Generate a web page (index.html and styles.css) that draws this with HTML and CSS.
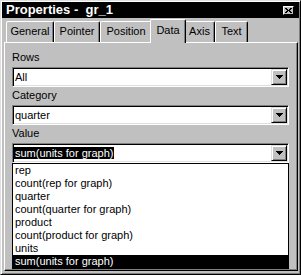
FILE: index.html
```html
<!DOCTYPE html>
<html>
<head>
  <meta charset="UTF-8">
  <title>Properties - gr_1</title>
  <link rel="stylesheet" href="styles.css">
</head>
<body>
  <div id="props-window">
    <div class="title-bar">
      <span class="title-text">Properties -  gr_1</span>
      <span class="close-btn">
        <svg width="7" height="5" viewBox="0 0 7 5" shape-rendering="crispEdges">
          <path d="M0 0h2v1H0zM5 0h2v1H5zM1 1h2v1H1zM4 1h2v1H4zM2 2h3v1H2zM1 3h2v1H1zM4 3h2v1H4zM0 4h2v1H0zM5 4h2v1H5z" fill="#000"/>
        </svg>
      </span>
    </div>

    <div class="tabs">
      <div class="tab" style="width:48px">General</div>
      <div class="tab" style="width:46px">Pointer</div>
      <div class="tab" style="width:52px">Position</div>
      <div class="tab active" style="width:36px">Data</div>
      <div class="tab" style="width:31px">Axis</div>
      <div class="tab" style="width:33px">Text</div>
    </div>

    <div class="panel">
      <div class="field-label">Rows</div>
      <div class="combo">
        <span class="combo-text">All</span>
        <span class="combo-btn"><svg width="7" height="4" viewBox="0 0 7 4" shape-rendering="crispEdges"><path d="M0 0h7v1H0zM1 1h5v1H1zM2 2h3v1H2zM3 3h1v1H3z" fill="#000"/></svg></span>
      </div>

      <div class="field-label">Category</div>
      <div class="combo">
        <span class="combo-text">quarter</span>
        <span class="combo-btn"><svg width="7" height="4" viewBox="0 0 7 4" shape-rendering="crispEdges"><path d="M0 0h7v1H0zM1 1h5v1H1zM2 2h3v1H2zM3 3h1v1H3z" fill="#000"/></svg></span>
      </div>

      <div class="field-label">Value</div>
      <div class="combo open">
        <span class="combo-text has-sel"><span class="sel">sum(units for graph)</span></span>
        <span class="combo-btn"><svg width="7" height="4" viewBox="0 0 7 4" shape-rendering="crispEdges"><path d="M0 0h7v1H0zM1 1h5v1H1zM2 2h3v1H2zM3 3h1v1H3z" fill="#000"/></svg></span>
      </div>
      <ul class="drop-list">
        <li>rep</li>
        <li>count(rep for graph)</li>
        <li>quarter</li>
        <li>count(quarter for graph)</li>
        <li>product</li>
        <li>count(product for graph)</li>
        <li>units</li>
        <li class="selected">sum(units for graph)</li>
      </ul>
    </div>
  </div>
</body>
</html>
```

FILE: styles.css
```css
body {
  margin: 0;
  font-family: "Liberation Sans", Arial, sans-serif;
  font-size: 11px;
  color: #000;
  background: #c0c0c0;
}
#props-window {
  width: 301px;
  height: 275px;
  box-sizing: border-box;
  display: flex;
  flex-direction: column;
  background: #c0c0c0;
  border: 1px solid;
  border-color: #dfdfdf #000 #000 #dfdfdf;
  box-shadow: inset 1px 1px #fff, inset -1px -1px #808080;
  padding: 1px;
}
.title-bar {
  height: 16px;
  flex: none;
  display: flex;
  align-items: center;
  justify-content: space-between;
  background: #000;
  color: #fff;
  padding-left: 4px;
}
.title-text {
  font-weight: bold;
  font-size: 13px;
  line-height: 16px;
  white-space: pre;
}
.close-btn {
  width: 11px;
  height: 9px;
  box-sizing: border-box;
  margin-right: 5px;
  display: flex;
  align-items: center;
  justify-content: center;
  background: #c0c0c0;
  border: 1px solid;
  border-color: #fff #000 #000 #fff;
}
.close-btn svg {
  display: block;
}
.tabs {
  height: 24px;
  flex: none;
  display: flex;
  align-items: flex-end;
  padding-left: 4px;
}
.tab {
  height: 21px;
  box-sizing: border-box;
  flex: none;
  text-align: center;
  line-height: 13px;
  padding-top: 3px;
  background: #c0c0c0;
  border-top: 1px solid #fff;
  border-left: 1px solid #fff;
  border-right: 1px solid #000;
  border-radius: 2px 2px 0 0;
  box-shadow: inset -1px 0 #808080;
}
.tab.active {
  position: relative;
  z-index: 1;
  height: 24px;
  padding-top: 4px;
  margin: 0 -2px -1px -2px;
}
.panel {
  flex: 1;
  margin: 0 1px 2px 2px;
  padding: 8px 7px 1px 7px;
  border-top: 1px solid #fff;
  border-left: 1px solid #fff;
  border-right: 1px solid #000;
  border-bottom: 1px solid #000;
  box-shadow: inset -1px -1px #808080;
}
.field-label {
  line-height: 13px;
  margin-bottom: 3px;
}
.combo {
  width: 277px;
  height: 20px;
  box-sizing: border-box;
  display: flex;
  align-items: center;
  padding: 1px;
  margin-bottom: 2px;
  background: #fff;
  border: 1px solid;
  border-color: #808080 #fff #fff #808080;
  box-shadow: inset 1px 1px #000, inset -1px -1px #dfdfdf;
}
.combo.open {
  margin-bottom: 0;
}
.combo-text {
  flex: 1;
  line-height: 16px;
  padding-left: 1px;
  white-space: nowrap;
}
.combo-text.has-sel {
  padding-left: 0;
}
.sel {
  display: inline-block;
  line-height: 12px;
  padding: 0 1px;
  background: #000;
  color: #fff;
}
.combo-btn {
  width: 16px;
  height: 16px;
  box-sizing: border-box;
  display: flex;
  align-items: center;
  justify-content: center;
  background: #c0c0c0;
  border: 1px solid;
  border-color: #dfdfdf #000 #000 #dfdfdf;
  box-shadow: inset 1px 1px #fff, inset -1px -1px #808080;
}
.combo-btn svg {
  display: block;
}
.drop-list {
  list-style: none;
  margin: 0;
  padding: 0;
  width: 277px;
  box-sizing: border-box;
  border: 1px solid #000;
  background: #fff;
}
.drop-list li {
  line-height: 13px;
  height: 13px;
  padding-left: 2px;
  white-space: nowrap;
}
.drop-list li.selected {
  background: #000;
  color: #fff;
}
```
